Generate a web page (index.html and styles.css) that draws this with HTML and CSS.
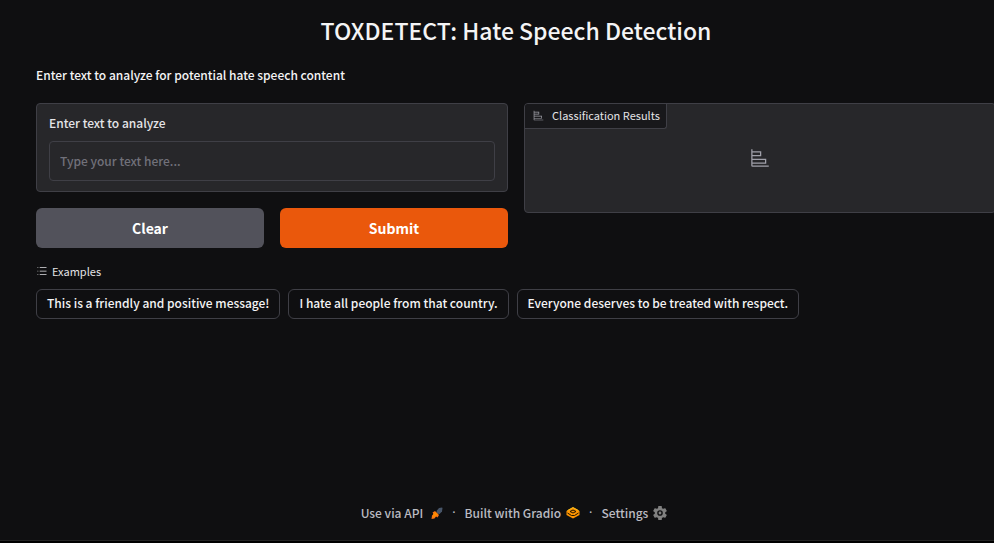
FILE: index.html
```html
<!DOCTYPE html>
<html lang="en">
<head>
<meta charset="utf-8">
<meta name="viewport" content="width=device-width, initial-scale=1">
<title>TOXDETECT</title>
<link rel="stylesheet" href="styles.css">
</head>
<body>
<div class="app">
  <main class="content">
    <h1 class="title">TOXDETECT: Hate Speech Detection</h1>
    <p class="intro">Enter text to analyze for potential hate speech content</p>
    <div class="columns">
      <form class="column">
        <div class="panel field">
          <label class="field-label" for="text">Enter text to analyze</label>
          <input class="field-input" id="text" type="text" placeholder="Type your text here...">
        </div>
        <div class="actions">
          <button class="button" type="reset">Clear</button>
          <button class="button primary" type="button">Submit</button>
        </div>
      </form>
      <section class="panel results">
        <h2 class="results-label">
          <svg class="chart-small" viewBox="0 0 32 32" aria-hidden="true"><path fill="currentColor" d="M4 2H2v26a2 2 0 0 0 2 2h26v-2H4v-3h22v-8H4v-4h14V5H4zm20 17v4H4v-4zM16 7v4H4V7z"/></svg>
          <span>Classification Results</span>
        </h2>
        <svg class="chart" viewBox="0 0 32 32" aria-hidden="true"><path fill="currentColor" d="M4 2H2v26a2 2 0 0 0 2 2h26v-2H4v-3h22v-8H4v-4h14V5H4zm20 17v4H4v-4zM16 7v4H4V7z"/></svg>
      </section>
    </div>
    <section>
      <h2 class="examples-label">
        <svg class="list-icon" viewBox="0 0 32 32" aria-hidden="true"><path fill="currentColor" d="M10 6h18v2H10zm0 18h18v2H10zm0-9h18v2H10zm-6 0h2v2H4zm0-9h2v2H4zm0 18h2v2H4z"/></svg>
        <span>Examples</span>
      </h2>
      <div class="examples">
        <button class="example" type="button">This is a friendly and positive message!</button>
        <button class="example" type="button">I hate all people from that country.</button>
        <button class="example" type="button">Everyone deserves to be treated with respect.</button>
      </div>
    </section>
  </main>
  <footer class="footer">
    <a class="link" href="#api">Use via API
      <svg class="icon rocket" viewBox="0 0 24 24" aria-hidden="true">
        <path fill="#475569" d="M11 8 16 2l6-1 1 1-1 7-5 5-5-1z"/>
        <path fill="#f97316" d="m3 11 5-3 8 8-3 5-3-2-3 4-6 1 1-7 3-3z"/>
        <path fill="#ff8a00" d="m5 13 4-3 5 5-4 3-5 3-2 0 1-3z"/>
      </svg></a>
    <span class="dot">·</span>
    <a class="link" href="#gradio">Built with Gradio
      <svg class="icon" viewBox="0 0 28 28" aria-hidden="true">
        <path fill="#ff9400" d="m1 10 13-7 13 7v8l-13 7-13-7z"/>
        <path fill="none" stroke="#201400" stroke-width="2" d="m8 11 6-3 6 3-6 3zM3 14l8 5h6l8-5"/>
        <path fill="none" stroke="#ffc21e" stroke-width="2" d="m3 9 11-6 11 6"/>
      </svg></a>
    <span class="dot">·</span>
    <button class="link" type="button">Settings
      <svg class="icon" viewBox="2 2 20 20" aria-hidden="true"><path fill="#808080" fill-rule="evenodd" d="M19.400 13a7.500 7.500 0 0 0 0-2l2.100-1.600a.5.5 0 0 0 .1-.7l-2-3.400a.5.5 0 0 0-.6-.2l-2.500 1a7 7 0 0 0-1.700-1L14.500 2.400A.5.5 0 0 0 14 2h-4a.5.5 0 0 0-.5.400L9.200 5.100a7 7 0 0 0-1.700 1l-2.500-1a.5.5 0 0 0-.6.200l-2 3.400a.5.5 0 0 0 .1.700L4.600 11a7.500 7.500 0 0 0 0 2l-2.100 1.600a.5.5 0 0 0-.1.700l2 3.400c.1.200.4.300.6.200l2.500-1a7 7 0 0 0 1.700 1l.3 2.700c0 .2.300.4.500.4h4c.2 0 .5-.2.500-.4l.3-2.700a7 7 0 0 0 1.700-1l2.500 1c.2.100.5 0 .6-.2l2-3.400a.5.5 0 0 0-.1-.7zM12 8a4 4 0 1 1 0 8 4 4 0 0 1 0-8zm0 2a2 2 0 1 0 0 4 2 2 0 0 0 0-4z"/></svg></button>
  </footer>
</div>
</body>
</html>
```
FILE: styles.css
```css
* {
  box-sizing: border-box;
}

body {
  margin: 0;
  overflow: hidden;
  background: #000;
  color: #f4f4f5;
  font: 500 12px/20px "Noto Sans CJK SC", "Open Sans", sans-serif;
}

button,
input {
  font: inherit;
  color: inherit;
}

/* The page runs slightly wider than the window. */
.app {
  display: flex;
  flex-direction: column;
  width: calc(100% + 38px);
  min-height: calc(100vh - 2px);
  padding: 14px 36px 17px;
  border-bottom: 1px solid #242424;
  background: #0f0f11;
}

.content {
  flex: 1;
}

.title {
  margin: 0 0 19px;
  font-size: 23px;
  font-weight: 500;
  line-height: 32px;
  text-align: center;
}

.intro {
  margin: 0 0 18px;
}

.columns {
  display: grid;
  grid-template-columns: 1fr 1fr;
  align-items: start;
  gap: 16px;
  margin-bottom: 14px;
}

.column {
  display: grid;
  gap: 16px;
}

.panel {
  border: 1px solid #3f3f46;
  border-radius: 4px;
  background: #27272a;
}

.field {
  padding: 9px 12px 10px;
}

.field-label {
  display: block;
  margin-bottom: 8px;
  color: #e4e4e7;
}

.field-input {
  display: block;
  width: 100%;
  height: 40px;
  padding: 0 10px 2px;
  border: 1px solid #3f3f46;
  border-radius: 4px;
  background: #27272a;
}

.field-input::placeholder {
  color: #71717a;
  opacity: 1;
}

.actions {
  display: grid;
  grid-template-columns: 1fr 1fr;
  gap: 16px;
}

.button {
  height: 40px;
  border: 0;
  border-radius: 6px;
  background: #52525b;
  color: #fff;
  font-size: 14px;
  font-weight: 700;
}

.primary {
  background: #ea580c;
}

.results {
  display: grid;
  grid-template-rows: 25px 1fr;
  height: 110px;
}

.results-label {
  display: flex;
  align-items: center;
  justify-self: start;
  gap: 8px;
  margin: 0;
  padding: 0 6px 2px 8px;
  border: solid #3f3f46;
  border-width: 0 1px 1px 0;
  border-radius: 3px 0 3px 0;
  background: #18181b;
  color: #e4e4e7;
  font-size: 11px;
  font-weight: 400;
}

.chart-small {
  width: 11px;
  height: 11px;
  color: #a1a1aa;
}

.chart {
  width: 20px;
  height: 20px;
  margin: 19px auto 0;
  color: #a1a1aa;
}

.examples-label {
  display: flex;
  align-items: center;
  gap: 4px;
  margin: 0 0 9px;
  color: #e4e4e7;
  font-size: 11px;
  font-weight: 400;
  line-height: 18px;
}

.list-icon {
  width: 12px;
  height: 12px;
}

.examples {
  display: flex;
  flex-wrap: wrap;
  gap: 8px;
}

.example {
  height: 30px;
  padding: 0 10px 2px;
  border: 1px solid #3f3f46;
  border-radius: 6px;
  background: none;
}

.footer {
  display: flex;
  justify-content: center;
  align-items: center;
  gap: 9px;
  padding-right: 4px;
  color: #bbbbc2;
}

.link {
  display: flex;
  align-items: center;
  gap: 5px;
  padding: 0;
  border: 0;
  background: none;
  color: inherit;
  text-decoration: none;
}

.dot {
  font-family: Roboto, sans-serif;
}

.icon {
  width: 14px;
  height: 14px;
}

.rocket {
  width: 12px;
  height: 12px;
  margin-left: 3px;
}
```
